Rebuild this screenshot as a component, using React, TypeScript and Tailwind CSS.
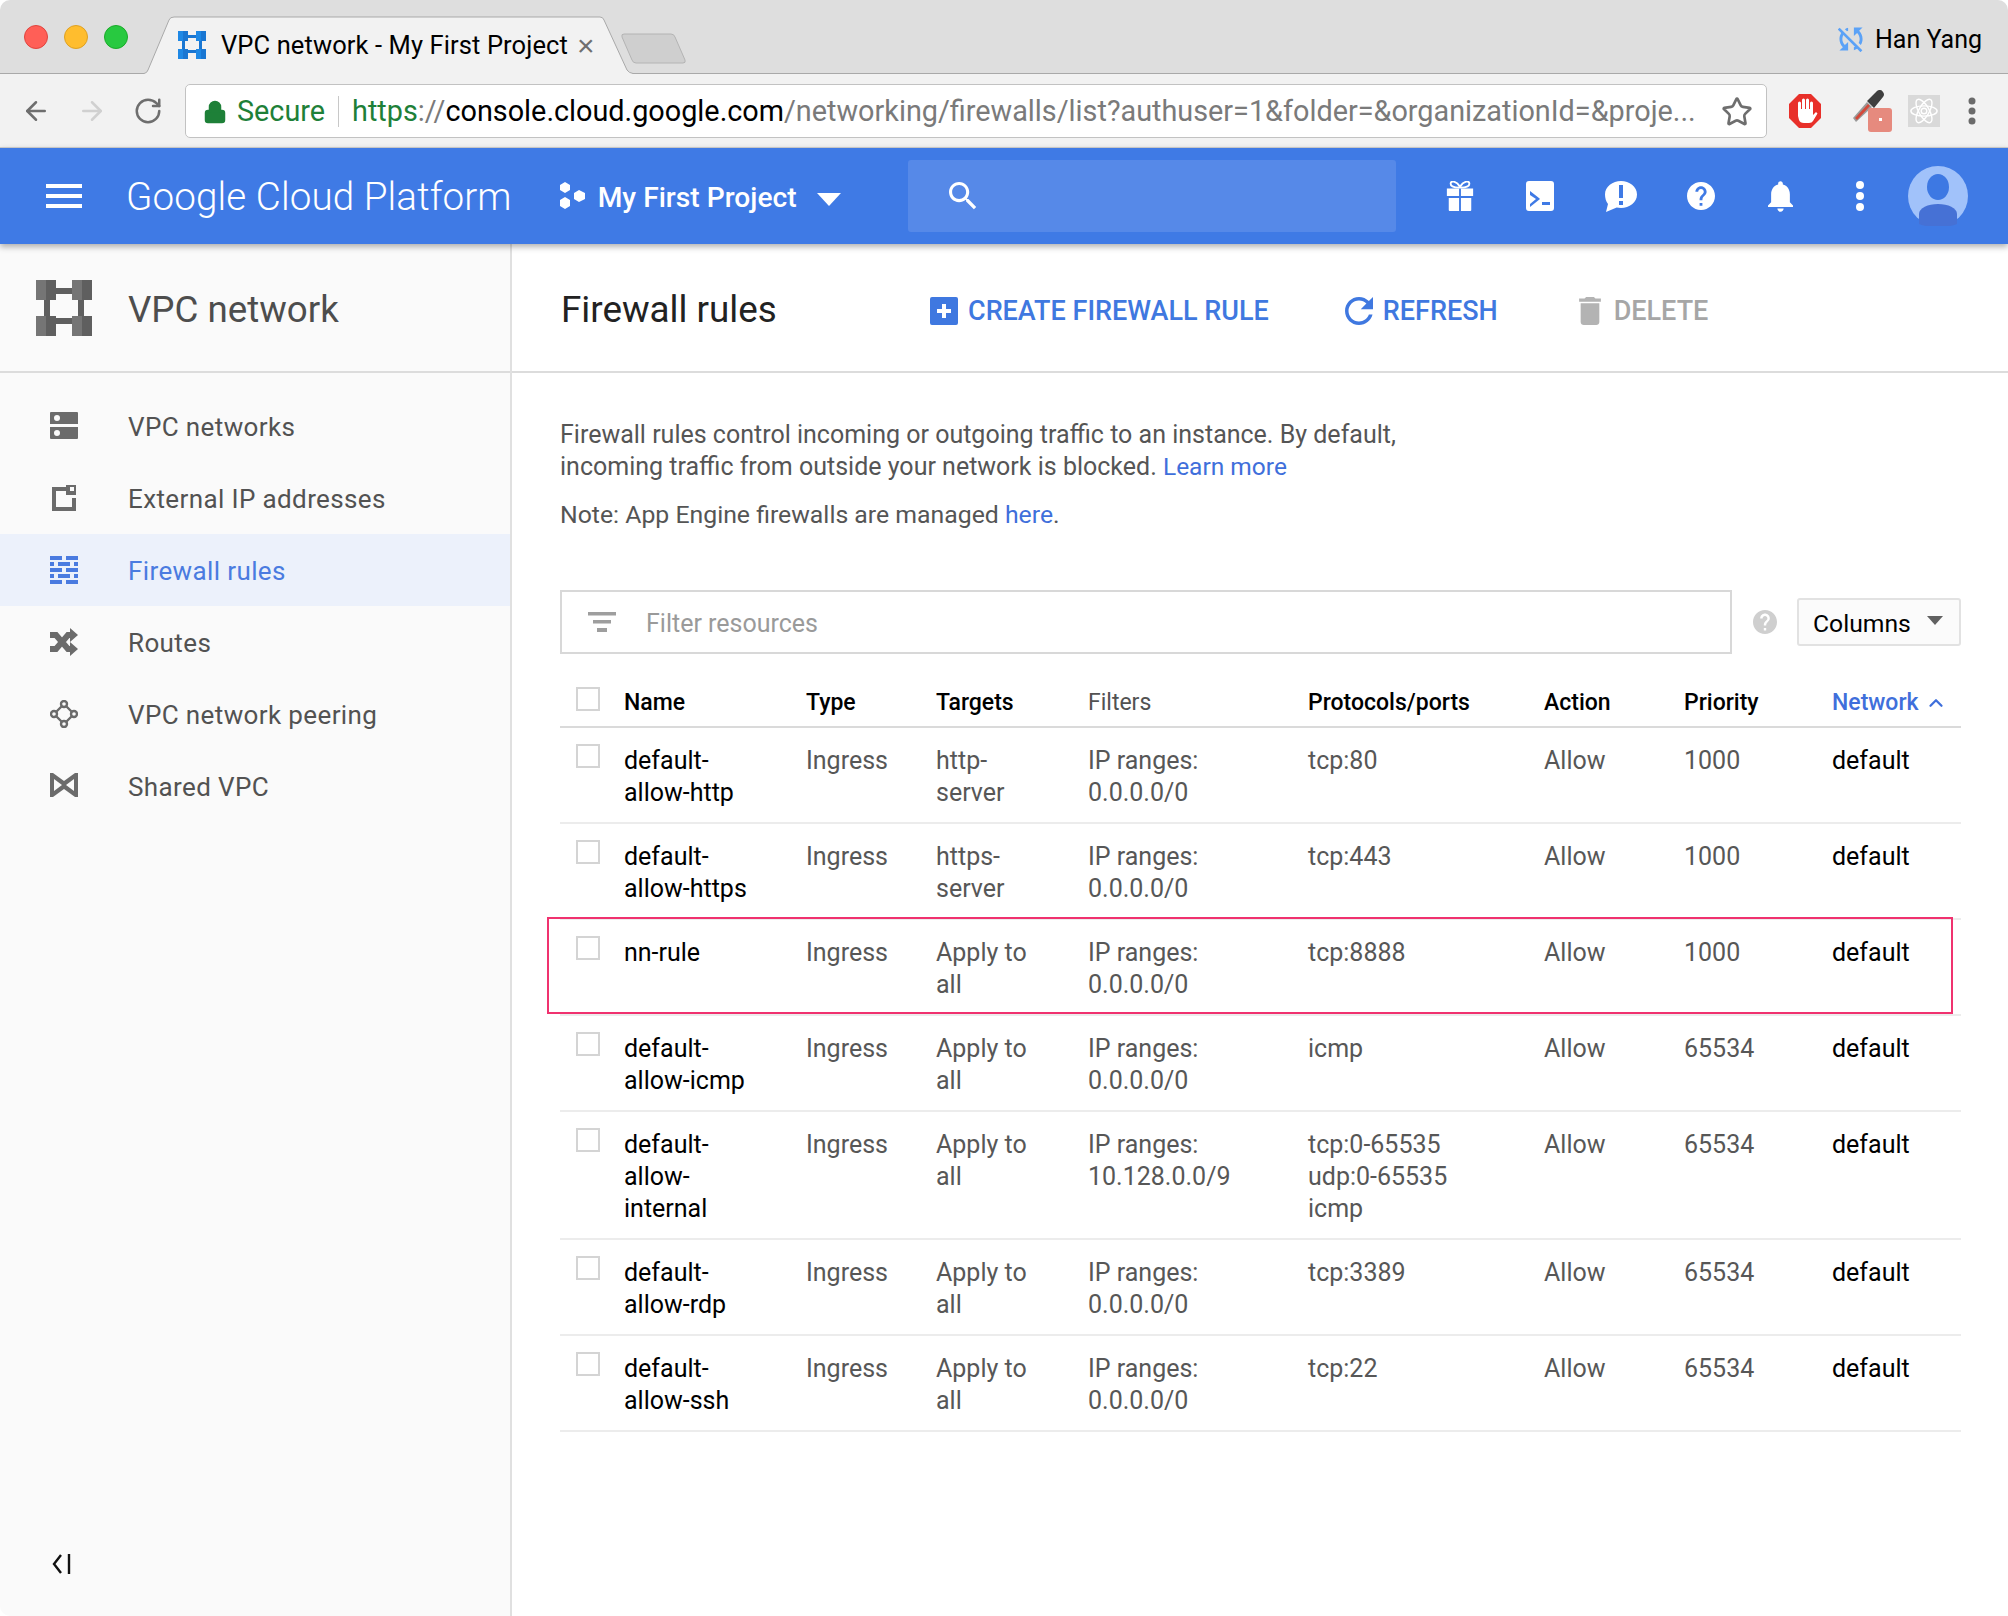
import { ArrowLeft, ArrowRight, RotateCw, Star, Lock, ChevronUp } from "lucide-react";

const rules = [
  { name: "default-allow-http", targets: "http-server", filter: "0.0.0.0/0", protocols: ["tcp:80"], priority: "1000" },
  { name: "default-allow-https", targets: "https-server", filter: "0.0.0.0/0", protocols: ["tcp:443"], priority: "1000" },
  { name: "nn-rule", targets: "Apply to all", filter: "0.0.0.0/0", protocols: ["tcp:8888"], priority: "1000", marked: true },
  { name: "default-allow-icmp", targets: "Apply to all", filter: "0.0.0.0/0", protocols: ["icmp"], priority: "65534" },
  { name: "default-allow-internal", targets: "Apply to all", filter: "10.128.0.0/9", protocols: ["tcp:0-65535", "udp:0-65535", "icmp"], priority: "65534" },
  { name: "default-allow-rdp", targets: "Apply to all", filter: "0.0.0.0/0", protocols: ["tcp:3389"], priority: "65534" },
  { name: "default-allow-ssh", targets: "Apply to all", filter: "0.0.0.0/0", protocols: ["tcp:22"], priority: "65534" },
];

const gridCols = "grid grid-cols-[64px_182px_130px_152px_220px_236px_140px_148px_1fr]";

function VpcLogo({ className, light, dark }: { className: string; light: string; dark: string }) {
  return (
    <svg viewBox="0 0 56 56" className={className}>
      <path d="M20 8h16v6H20zM20 44h16v-6H20zM8 20h6v16H8zM42 20h6v16h-6z" fill={dark} />
      {[[0, 0], [36, 0], [0, 36], [36, 36]].map(([x, y]) => (
        <g key={`${x}-${y}`}>
          <rect x={x} y={y} width="10" height="20" fill={light} />
          <rect x={x + 10} y={y} width="10" height="20" fill={dark} />
        </g>
      ))}
    </svg>
  );
}

function NavIcon({ kind, color }: { kind: string; color: string }) {
  const cls = "h-[28px] w-[28px]";
  if (kind === "networks") {
    return (
      <svg viewBox="0 0 28 28" className={cls} fill={color}>
        <path fillRule="evenodd" d="M1 0h26a1 1 0 0 1 1 1v11H0V1a1 1 0 0 1 1-1zm6 3a3 3 0 1 0 0 6 3 3 0 0 0 0-6zM0 15h28v11a1 1 0 0 1-1 1H1a1 1 0 0 1-1-1zm7 3a3 3 0 1 0 0 6 3 3 0 0 0 0-6z" />
      </svg>
    );
  }
  if (kind === "external") {
    return (
      <svg viewBox="0 0 28 28" className={cls} fill={color}>
        <path d="M2 3h14v4H6v16h16v-9h4v13H2z" />
        <path fillRule="evenodd" d="M16 1h10v10H16zm4 2v4h4V3z" />
      </svg>
    );
  }
  if (kind === "firewall") {
    return (
      <svg viewBox="0 0 28 28" className={cls} fill={color}>
        <path d="M0 0h12v4H0zM16 0h12v4H16zM0 6h4v4H0zM8 6h12v4H8zM24 6h4v4h-4zM0 12h12v4H0zM16 12h12v4H16zM0 18h4v4H0zM8 18h12v4H8zM24 18h4v4h-4zM0 24h12v4H0zM16 24h12v4H16z" />
      </svg>
    );
  }
  if (kind === "routes") {
    return (
      <svg viewBox="0 0 28 28" className={cls}>
        <path d="M0 7h6l12 14h4M0 21h6L18 7h4" fill="none" stroke={color} strokeWidth="6" />
        <path d="M20 0l8 7-8 7zM20 14l8 7-8 7z" fill={color} />
      </svg>
    );
  }
  if (kind === "peering") {
    return (
      <svg viewBox="0 0 28 28" className={cls} fill="none" stroke={color} strokeWidth="2.400">
        <circle cx="14" cy="4" r="3" />
        <circle cx="14" cy="24" r="3" />
        <circle cx="4" cy="14" r="3" />
        <circle cx="24" cy="14" r="3" />
        <path d="M12 6 6 12M16 6l6 6M6 16l6 6M22 16l-6 6" />
      </svg>
    );
  }
  return (
    <svg viewBox="0 0 28 28" className={cls} fill={color}>
      <path fillRule="evenodd" d="M0 1h3l11 8 11-8h3v24h-3l-11-8-11 8H0zm4 6v12l8-6zm20 0-8 6 8 6z" />
    </svg>
  );
}

function Checkbox() {
  return <span className="block h-[24px] w-[24px] border-2 border-[#d4d4d4] bg-white" />;
}

function AppBarIcons() {
  return (
    <div className="ml-[50px] flex items-center text-white">
      {/* gift */}
      <svg viewBox="0 0 28 32" className="h-[30px] w-[28px]" fill="currentColor">
        <path d="M0 8h13v8H0zM15 8h13v8H15zM2 18h11v14H3a1 1 0 0 1-1-1zM15 18h11v13a1 1 0 0 1-1 1H15z" />
        <path d="M13 7C10 7 4 7 4 3s6-3 10 3c4-6 10-7 10-3s-6 4-9 4z" fill="none" stroke="currentColor" strokeWidth="2" />
      </svg>
      {/* cloud shell */}
      <svg viewBox="0 0 28 30" className="ml-[52px] h-[30px] w-[28px]" fill="currentColor">
        <path fillRule="evenodd" d="M3 0h22a3 3 0 0 1 3 3v24a3 3 0 0 1-3 3H3a3 3 0 0 1-3-3V3a3 3 0 0 1 3-3zm1 10v4l6 4-6 5v3l10-8-1-1zm12 11v3h8v-3z" />
      </svg>
      {/* feedback */}
      <svg viewBox="0 0 32 32" className="ml-[51px] h-[32px] w-[32px]" fill="currentColor">
        <path fillRule="evenodd" d="M16 1c8.300 0 16 5.500 16 13.500S24.300 28 16 28c-1.500 0-3-.200-4.300-.500L1 32l2-8C1 21.500 0 18 0 14.500 0 6.500 7.700 1 16 1zm-2 4v13h4V5zm0 16v4h4v-4z" />
      </svg>
      {/* help */}
      <svg viewBox="2 2 20 20" className="ml-[50px] h-[28px] w-[28px]" fill="currentColor">
        <path d="M12 2C6.480 2 2 6.480 2 12s4.480 10 10 10 10-4.480 10-10S17.520 2 12 2zm1 17h-2v-2h2v2zm2.070-7.750l-.9.920C13.450 12.900 13 13.500 13 15h-2v-.5c0-1.100.45-2.100 1.170-2.830l1.240-1.260c.37-.36.59-.86.59-1.410 0-1.100-.9-2-2-2s-2 .9-2 2H8c0-2.210 1.790-4 4-4s4 1.790 4 4c0 .88-.36 1.680-.93 2.250z" />
      </svg>
      {/* notifications */}
      <svg viewBox="4 2 16 20" className="ml-[53px] h-[32px] w-[25px]" fill="currentColor">
        <path d="M12 22c1.100 0 2-.9 2-2h-4c0 1.100.89 2 2 2zm6-6v-5c0-3.070-1.640-5.640-4.500-6.320V4c0-.83-.67-1.500-1.500-1.500s-1.500.67-1.500 1.500v.68C7.630 5.360 6 7.920 6 11v5l-2 2v1h16v-1l-2-2z" />
      </svg>
      {/* more */}
      <svg viewBox="0 0 8 30" className="ml-[63px] h-[30px] w-[8px]" fill="currentColor">
        <circle cx="4" cy="4" r="4" />
        <circle cx="4" cy="15" r="4" />
        <circle cx="4" cy="26" r="4" />
      </svg>
      {/* avatar */}
      <svg viewBox="0 0 60 60" className="ml-[44px] h-[60px] w-[60px]">
        <circle cx="30" cy="30" r="30" fill="#a1c2fa" />
        <ellipse cx="30" cy="21" rx="11" ry="13" fill="#3d78e3" />
        <path d="M11 58V48c0-6 9-10 19-10s19 4 19 10v10c-5 2-12 3-19 3s-14-1-19-3z" fill="#4671d5" />
      </svg>
    </div>
  );
}

function ChromeBar() {
  return (
    <>
      <div className="relative flex h-[74px] items-center border-b border-[#a9a9a9] bg-[#dedede] pl-[24px]">
        <span className="h-[24px] w-[24px] rounded-full border border-[#e0443e] bg-[#ff5f57]" />
        <span className="ml-[16px] h-[24px] w-[24px] rounded-full border border-[#dea123] bg-[#ffbd2e]" />
        <span className="ml-[16px] h-[24px] w-[24px] rounded-full border border-[#1aab29] bg-[#28c940]" />
        {/* active tab */}
        <svg viewBox="0 0 490 58" className="absolute bottom-[-1px] left-[143px] h-[58px] w-[490px]">
          <path d="M0 57.500h1Q4 57 5 54L26 4Q27 1 31 1H457Q460 1 461 4L484 54Q486 57 490 57.500V58H0z" fill="#f2f2f2" />
          <path d="M0 57.500h1Q4 57 5 54L26 4Q27 1 31 1H457Q460 1 461 4L484 54Q486 57 490 57.500" fill="none" stroke="#a9a9a9" />
        </svg>
        <div className="relative ml-[50px] flex items-center pt-[18px]">
          <VpcLogo className="-mt-[2px] h-[28px] w-[28px]" light="#1e88e5" dark="#1976d2" />
          <span className="ml-[15px] font-['Roboto',sans-serif] text-[25.500px] leading-none tracking-[0.1px] text-black">VPC network - My First Project</span>
          <span className="ml-[9px] font-['Liberation_Sans',sans-serif] text-[30px] leading-none text-[#6f6f6f]">×</span>
        </div>
        {/* new tab button */}
        <svg viewBox="0 0 66 32" className="absolute left-[621px] top-[33px] h-[32px] w-[66px]">
          <path d="M3 1H50Q53 1 54 4L64 27Q65 30 62 30H15Q12 30 11 27L1 4Q0 1 3 1z" fill="#cfcfcf" stroke="#b4b4b4" />
        </svg>
        <div className="ml-auto flex items-center pr-[26px] pt-[6px]">
          <svg viewBox="3 3 18 18" className="-mt-[2px] h-[26px] w-[26px]" fill="#5ba2f7">
            <path d="M10 6.350V4.260c-.8.210-1.550.54-2.230.96l1.460 1.460c.25-.12.5-.24.77-.33zm-7.140-.94l2.360 2.360C4.450 8.990 4 10.440 4 12c0 2.210.91 4.200 2.360 5.640L4 20h6v-6l-2.240 2.240C6.680 15.150 6 13.660 6 12c0-1 .25-1.940.68-2.770l8.080 8.080c-.25.130-.5.250-.77.340v2.090c.8-.21 1.550-.54 2.230-.96l2.360 2.360 1.270-1.270L4.140 4.140 2.860 5.410zM20 4h-6v6l2.240-2.240C17.320 8.850 18 10.340 18 12c0 1-.25 1.940-.68 2.770l1.460 1.460C19.550 15.010 20 13.560 20 12c0-2.210-.91-4.200-2.360-5.640L20 4z" />
          </svg>
          <span className="ml-[11px] font-['Roboto',sans-serif] text-[25px] leading-none text-black">Han Yang</span>
        </div>
      </div>
      <div className="flex h-[73px] items-center bg-[#f2f2f2] pl-[21px]">
        <ArrowLeft className="h-[30px] w-[30px] text-[#6e6e6e]" strokeWidth={2} />
        <ArrowRight className="ml-[26px] h-[30px] w-[30px] text-[#d0d0d0]" strokeWidth={2} />
        <RotateCw className="ml-[26px] h-[30px] w-[30px] text-[#6e6e6e]" strokeWidth={2} />
        <div className="ml-[22px] flex h-[54px] w-[1582px] items-center rounded-[5px] border border-[#c2c2c2] bg-white pl-[17px] pt-[2px] font-['Roboto',sans-serif] text-[28.800px] leading-none">
          <Lock className="h-[24px] w-[24px] fill-[#1e8038] text-[#1e8038]" strokeWidth={2.500} />
          <span className="ml-[10px] text-[#1e8038]">Secure</span>
          <span className="ml-[13px] h-[31px] w-px bg-[#c8c8c8]" />
          <span className="ml-[13px] whitespace-nowrap">
            <span className="text-[#1e8038]">https</span>
            <span className="text-[#7a7a7a]">://</span>
            <span className="text-black">console.cloud.google.com</span>
            <span className="text-[#7a7a7a]">/networking/firewalls/list?authuser=1&amp;folder=&amp;organizationId=&amp;proje...</span>
          </span>
          <Star className="ml-auto mr-[13px] h-[32px] w-[32px] text-[#6e6e6e]" strokeWidth={2} />
        </div>
        <svg viewBox="0 0 32 34" className="ml-[22px] h-[34px] w-[32px]">
          <path d="M10 0h12l10 10v14L22 34H10L0 24V10z" fill="#e8302a" />
          <path d="M10.500 18V9M14.500 16V6M18.500 16V6M22.500 17V9" fill="none" stroke="#fff" strokeWidth="3" strokeLinecap="round" />
          <path d="M9 15h15v6l3-3 1.500 1.500L24 27q-1 2-4 2h-5q-4 0-5-3l-1-4z" fill="#fff" />
        </svg>
        <div className="relative ml-[32px] h-[42px] w-[39px]">
          <svg viewBox="0 0 32 32" className="absolute left-0 top-0 h-[32px] w-[32px]">
            <path d="M0 28 14 12l5 5L3 32z" fill="#9a9a9a" />
            <path d="M2 28 15 14l2 2L4 30z" fill="#d4493a" />
            <path d="M14 11 24 1a4 4 0 0 1 6 1 4 4 0 0 1 0 5L21 18z" fill="#3f3f3f" />
          </svg>
          <span className="absolute bottom-0 right-0 flex h-[24px] w-[24px] items-center justify-center rounded-[3px] bg-[#e68a7e]">
            <span className="h-[3px] w-[3px] bg-white" />
          </span>
        </div>
        <span className="ml-[16px] flex h-[32px] w-[32px] items-center justify-center bg-[#d9d9d9]">
          <svg viewBox="0 0 32 32" className="h-[30px] w-[30px]" fill="none" stroke="#fff" strokeWidth="1.500">
            <ellipse cx="16" cy="16" rx="14" ry="5.500" />
            <ellipse cx="16" cy="16" rx="14" ry="5.500" transform="rotate(60 16 16)" />
            <ellipse cx="16" cy="16" rx="14" ry="5.500" transform="rotate(120 16 16)" />
            <circle cx="16" cy="16" r="3" />
          </svg>
        </span>
        <svg viewBox="0 0 8 28" className="ml-[28px] h-[28px] w-[8px]" fill="#6b6b6b">
          <circle cx="4" cy="4" r="3.500" />
          <circle cx="4" cy="14" r="3.500" />
          <circle cx="4" cy="24" r="3.500" />
        </svg>
      </div>
    </>
  );
}

function CloudHeader() {
  return (
    <header className="relative z-10 flex h-[97px] items-center border-t border-[#c6c6c6] bg-[#3f7ae5] pl-[46px] text-white shadow-[0_3px_6px_rgba(0,0,0,0.3)]">
      <svg viewBox="0 0 36 24" className="h-[24px] w-[36px]" fill="#fff">
        <path d="M0 0h36v4H0zM0 10h36v4H0zM0 20h36v4H0z" />
      </svg>
      <span className="ml-[44px] pt-[2px] font-['Roboto',sans-serif] text-[38.600px] font-light leading-none tracking-[0.1px]">Google Cloud Platform</span>
      <svg viewBox="0 0 28 28" className="ml-[46px] h-[28px] w-[28px]" fill="#fff">
        <path d="M7 0l5 3v5l-5 3-5-3V3zM7 15l5 3v6l-5 3-5-3v-6zM21 8l6 3v6l-6 3-5-3v-6z" />
      </svg>
      <span className="ml-[12px] pt-[5px] font-['Roboto',sans-serif] text-[28.200px] font-medium leading-none">My First Project</span>
      <svg viewBox="0 0 24 13" className="ml-[20px] mt-[6px] h-[13px] w-[24px]" fill="#fff">
        <path d="M0 0h24L12 13z" />
      </svg>
      <div className="ml-[67px] flex h-[72px] w-[488px] items-center rounded-[3px] bg-[#5689e8] pl-[41px]">
        <svg viewBox="3 3 18 18" className="h-[28px] w-[28px]" fill="#fff">
          <path d="M15.500 14h-.79l-.28-.27C15.410 12.590 16 11.110 16 9.500 16 5.910 13.090 3 9.500 3S3 5.910 3 9.500 5.910 16 9.500 16c1.610 0 3.090-.59 4.230-1.570l.27.28v.79l5 4.990L20.490 19l-4.990-5zm-6 0C7.010 14 5 11.990 5 9.500S7.010 5 9.500 5 14 7.010 14 9.500 11.990 14 9.500 14z" />
        </svg>
      </div>
      <AppBarIcons />
    </header>
  );
}

function Sidebar() {
  const items = [
    { kind: "networks", label: "VPC networks" },
    { kind: "external", label: "External IP addresses" },
    { kind: "firewall", label: "Firewall rules", active: true },
    { kind: "routes", label: "Routes" },
    { kind: "peering", label: "VPC network peering" },
    { kind: "shared", label: "Shared VPC" },
  ];

  return (
    <aside className="flex w-[512px] shrink-0 flex-col border-r-2 border-[#e0e0e0] bg-[#fafafa] font-['Roboto',sans-serif]">
      <div className="flex h-[129px] items-center border-b-2 border-[#dcdcdc] pl-[36px]">
        <VpcLogo className="h-[56px] w-[56px]" light="#757575" dark="#5f5f5f" />
        <span className="ml-[36px] pt-[5px] text-[36.700px] leading-none text-[#4d4d4d]">VPC network</span>
      </div>
      <nav className="mt-[17px] flex flex-col">
        {items.map((item) => (
          <div
            key={item.label}
            className={`flex h-[72px] items-center pl-[50px] text-[26px] tracking-[0.38px] ${
              item.active ? "bg-[#ecf1fb] text-[#4a7be0]" : "text-[#525252]"
            }`}
          >
            <NavIcon kind={item.kind} color={item.active ? "#4a7be0" : "#6b6b6b"} />
            <span className="ml-[50px] pt-[2px]">{item.label}</span>
          </div>
        ))}
      </nav>
      <svg viewBox="0 0 20 20" className="ml-[52px] mt-auto mb-[42px] h-[20px] w-[20px]" fill="none" stroke="#111" strokeWidth="2.400">
        <path d="M9 1 2 10l7 9M17 0v20" />
      </svg>
    </aside>
  );
}

function RulesTable() {
  const headers = ["Name", "Type", "Targets", "Filters", "Protocols/ports", "Action", "Priority"];

  return (
    <div className="mt-[26px] text-[25px] leading-[32px]">
      <div className={`${gridCols} h-[48px] items-center border-b-2 border-[#dadada] text-[23px] font-medium text-black`}>
        <div className="-mt-[8px] pl-[16px]">
          <Checkbox />
        </div>
        {headers.map((header) => (
          <span key={header} className={header === "Filters" ? "font-normal text-[#525252]" : ""}>
            {header}
          </span>
        ))}
        <span className="flex items-center text-[#3f6fdb]">
          Network
          <ChevronUp className="ml-[6px] h-[22px] w-[22px]" strokeWidth={2.500} />
        </span>
      </div>
      {rules.map((rule) => (
        <div key={rule.name} className={`${gridCols} relative border-b-2 border-[#ececec] pb-[13px] pt-[17px] text-[#575757]`}>
          <div className="-mt-[1px] pl-[16px]">
            <Checkbox />
          </div>
          <span className="pr-[52px] text-black">{rule.name}</span>
          <span>Ingress</span>
          <span className="pr-[40px]">{rule.targets}</span>
          <span className="pr-[40px]">IP ranges: {rule.filter}</span>
          <div>
            {rule.protocols.map((protocol) => (
              <div key={protocol}>{protocol}</div>
            ))}
          </div>
          <span>Allow</span>
          <span>{rule.priority}</span>
          <span className="text-black">default</span>
          {rule.marked ? (
            <span className="absolute -left-[13px] right-[8px] top-[-3px] bottom-0 border-2 border-[#f0326f]" />
          ) : null}
        </div>
      ))}
    </div>
  );
}

function Main() {
  return (
    <main className="min-w-0 flex-1 bg-white font-['Roboto',sans-serif]">
      <div className="flex h-[129px] items-center border-b-2 border-[#dcdcdc] pl-[49px]">
        <h1 className="w-[369px] pt-[5px] text-[36.800px] font-normal leading-none text-[#222]">Firewall rules</h1>
        <div className="flex items-center pt-[6px] text-[27px] font-medium text-[#3f78e0]">
          <svg viewBox="0 0 28 28" className="h-[28px] w-[28px]" fill="#3f78e0">
            <path fillRule="evenodd" d="M2 0h24a2 2 0 0 1 2 2v24a2 2 0 0 1-2 2H2a2 2 0 0 1-2-2V2a2 2 0 0 1 2-2zm10 7v5H7v4h5v5h4v-5h5v-4h-5V7z" />
          </svg>
          <span className="ml-[10px] pt-[2px]">CREATE FIREWALL RULE</span>
          <svg viewBox="4 4 16 16" className="ml-[76px] h-[28px] w-[28px]" fill="#3f78e0">
            <path d="M17.650 6.350C16.200 4.900 14.210 4 12 4c-4.420 0-7.990 3.580-7.990 8s3.570 8 7.990 8c3.730 0 6.840-2.550 7.730-6h-2.080c-.82 2.330-3.040 4-5.650 4-3.310 0-6-2.690-6-6s2.690-6 6-6c1.660 0 3.140.69 4.220 1.780L13 11h7V4l-2.350 2.350z" />
          </svg>
          <span className="ml-[10px] pt-[2px]">REFRESH</span>
          <svg viewBox="5 3 14 18" className="ml-[80px] h-[28px] w-[24px]" fill="#b3b3b3">
            <path d="M6 19c0 1.100.9 2 2 2h8c1.100 0 2-.9 2-2V7H6v12zM19 4h-3.500l-1-1h-5l-1 1H5v2h14V4z" />
          </svg>
          <span className="ml-[12px] pt-[2px] text-[#a6a6a6]">DELETE</span>
        </div>
      </div>
      <div className="pl-[48px] pr-[47px] pt-[46px] text-[25px] leading-[32px] text-[#555]">
        <p className="w-[850px]">
          Firewall rules control incoming or outgoing traffic to an instance. By default, incoming traffic from outside your network is blocked.{" "}
          <span className="text-[24.500px] text-[#3f6fdb]">Learn more</span>
        </p>
        <p className="mt-[16px] text-[24.800px]">
          Note: App Engine firewalls are managed <span className="text-[#3f6fdb]">here</span>.
        </p>
        <div className="mt-[59px] flex items-center">
          <div className="flex h-[64px] w-[1172px] items-center border-2 border-[#d8d8d8] pl-[26px]">
            <svg viewBox="0 0 28 20" className="h-[20px] w-[28px]" fill="#9e9e9e">
              <path d="M0 0h28v3.500H0zM5 8h18v3.500H5zM9 16h10v4H9z" />
            </svg>
            <span className="ml-[30px] pt-[3px] text-[#9a9a9a]">Filter resources</span>
          </div>
          <svg viewBox="2 2 20 20" className="ml-[21px] h-[24px] w-[24px]" fill="#cfcfcf">
            <path d="M12 2C6.480 2 2 6.480 2 12s4.480 10 10 10 10-4.480 10-10S17.520 2 12 2zm1 17h-2v-2h2v2zm2.070-7.750l-.9.920C13.450 12.900 13 13.500 13 15h-2v-.5c0-1.100.45-2.100 1.170-2.830l1.240-1.260c.37-.36.59-.86.59-1.410 0-1.100-.9-2-2-2s-2 .9-2 2H8c0-2.210 1.790-4 4-4s4 1.790 4 4c0 .88-.36 1.680-.93 2.250z" />
          </svg>
          <div className="ml-[20px] flex h-[48px] w-[164px] items-center rounded-[3px] border-2 border-[#e2e2e2] bg-[#fbfbfb] pl-[14px] text-[24.700px] text-black">
            <span className="pt-[3px]">Columns</span>
            <svg viewBox="0 0 16 9" className="ml-[16px] mb-[3px] h-[9px] w-[16px]" fill="#616161">
              <path d="M0 0h16L8 9z" />
            </svg>
          </div>
        </div>
        <RulesTable />
      </div>
    </main>
  );
}

export default function App() {
  return (
    <div className="h-[1616px] w-[2008px] overflow-hidden bg-white">
      <div className="flex h-full flex-col overflow-hidden rounded-[10px]">
        <ChromeBar />
        <CloudHeader />
        <div className="flex min-h-0 flex-1">
          <Sidebar />
          <Main />
        </div>
      </div>
    </div>
  );
}
